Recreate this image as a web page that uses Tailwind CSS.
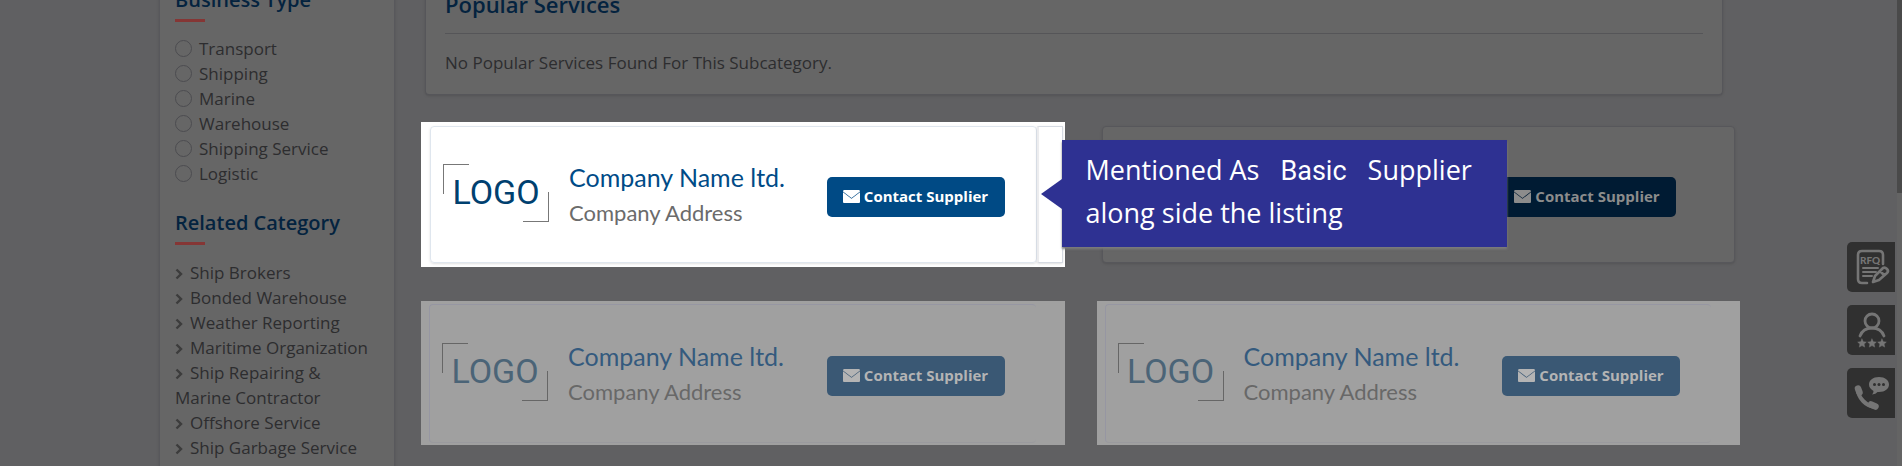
<!DOCTYPE html>
<html lang="en">
<head>
    <meta charset="UTF-8">
    <meta name="viewport" content="width=device-width, initial-scale=1.0">
    <title>Suppliers</title>
    <script src="https://cdn.jsdelivr.net/npm/@tailwindcss/browser@4"></script>
</head>
<body class="bg-[#606062] font-['Open_Sans',sans-serif] text-[17px] leading-[25px] text-[#2d2d2f] h-screen overflow-hidden">
    <svg class="hidden">
        <symbol id="envelope" viewBox="0 0 17 13">
            <path fill="currentColor" d="M1 0h15Q17 0 17 1.500L8.500 8 0 1.500Q0 0 1 0zM0 2.300 8.500 8.800 17 2.300v9.700Q17 13 16 13h-15Q0 13 0 12z" />
        </symbol>
        <symbol id="chevron" viewBox="0 0 8 12">
            <path d="M1.500 1.500 6 6l-4.500 4.500" fill="none" stroke="currentColor" stroke-width="2.400" />
        </symbol>
    </svg>

    <div class="flex -mt-[15px] pl-[159px] pr-[162px]">
        <!-- Sidebar -->
        <aside class="w-[236px] shrink-0 h-[500px] bg-[#666] border-x border-[#58585c] shadow pl-[15px] pr-4">
            <h2 class="text-xl leading-[30px] font-semibold text-[#04233f]">Business Type</h2>
            <div class="mt-1 w-[30px] h-[3px] bg-[#853635]"></div>
            <div class="mt-[14px]">
                <label class="flex items-center gap-[7px]"><input type="radio" name="type" class="appearance-none size-[17px] rounded-full border border-[#4c4c50]">Transport</label>
                <label class="flex items-center gap-[7px]"><input type="radio" name="type" class="appearance-none size-[17px] rounded-full border border-[#4c4c50]">Shipping</label>
                <label class="flex items-center gap-[7px]"><input type="radio" name="type" class="appearance-none size-[17px] rounded-full border border-[#4c4c50]">Marine</label>
                <label class="flex items-center gap-[7px]"><input type="radio" name="type" class="appearance-none size-[17px] rounded-full border border-[#4c4c50]">Warehouse</label>
                <label class="flex items-center gap-[7px]"><input type="radio" name="type" class="appearance-none size-[17px] rounded-full border border-[#4c4c50]">Shipping Service</label>
                <label class="flex items-center gap-[7px]"><input type="radio" name="type" class="appearance-none size-[17px] rounded-full border border-[#4c4c50]">Logistic</label>
            </div>

            <h2 class="mt-[22px] text-xl leading-[30px] font-semibold text-[#04233f]">Related Category</h2>
            <div class="mt-1 w-[30px] h-[3px] bg-[#853635]"></div>
            <ul class="mt-[15px]">
                <li><a href="#"><svg class="inline w-2 h-3 mr-[7px] text-[#3c3c3c]"><use href="#chevron" /></svg>Ship Brokers</a></li>
                <li><a href="#"><svg class="inline w-2 h-3 mr-[7px] text-[#3c3c3c]"><use href="#chevron" /></svg>Bonded Warehouse</a></li>
                <li><a href="#"><svg class="inline w-2 h-3 mr-[7px] text-[#3c3c3c]"><use href="#chevron" /></svg>Weather Reporting</a></li>
                <li><a href="#"><svg class="inline w-2 h-3 mr-[7px] text-[#3c3c3c]"><use href="#chevron" /></svg>Maritime Organization</a></li>
                <li><a href="#"><svg class="inline w-2 h-3 mr-[7px] text-[#3c3c3c]"><use href="#chevron" /></svg>Ship Repairing &amp;<br>Marine Contractor</a></li>
                <li><a href="#"><svg class="inline w-2 h-3 mr-[7px] text-[#3c3c3c]"><use href="#chevron" /></svg>Offshore Service</a></li>
                <li><a href="#"><svg class="inline w-2 h-3 mr-[7px] text-[#3c3c3c]"><use href="#chevron" /></svg>Ship Garbage Service</a></li>
            </ul>
        </aside>

        <main class="flex-1 ml-[26px]">
            <!-- Popular services -->
            <section class="ml-1 mr-[17px] bg-[#666] border border-t-0 border-[#56565a] rounded-sm shadow px-[19px] pt-1 pb-[19px]">
                <h2 class="pb-[14px] border-b border-[#555558] text-[22px] leading-[30px] font-semibold text-[#04233f]">Popular Services</h2>
                <p class="mt-4">No Popular Services Found For This Subcategory.</p>
            </section>

            <!-- Supplier listing -->
            <div class="mt-[27px] grid grid-cols-2 gap-x-8 gap-y-[34px]">
                <article class="relative flex h-[145px] bg-white py-1 pl-[9px] pr-[2px]">
                    <div class="flex flex-1 items-center border border-[#dfe6ee] rounded-sm shadow-sm pl-3 pr-[31px]">
                        <div class="relative w-[106px] h-[58px] mb-1 flex items-center justify-center text-[34px] text-[#00406f] font-['Liberation_Sans_Narrow','Roboto',sans-serif]">
                            <span class="absolute left-0 top-0 w-[26px] h-[30px] border-l border-t border-[#777]"></span>
                            LOGO
                            <span class="absolute right-0 bottom-0 w-[26px] h-[30px] border-r border-b border-[#777]"></span>
                        </div>
                        <div class="ml-5 flex-1 font-['Lato',sans-serif]">
                            <h3 class="text-[25px] leading-9 text-[#004b87]">Company Name ltd.</h3>
                            <p class="text-[22px] leading-9 text-[#6b6b6b]">Company Address</p>
                        </div>
                        <button class="mt-1 flex items-center justify-center gap-1 w-[178px] h-10 rounded-[5px] bg-[#004a85] text-white text-[15px] font-bold"><svg class="w-[17px] h-[13px]"><use href="#envelope" /></svg>Contact Supplier</button>
                    </div>
                    <div class="w-[26px] border-y border-r border-[#d5dae2] border-l-2 border-l-[#ececee] shadow-sm"></div>

                    <!-- Callout -->
                    <div class="absolute z-10 left-full top-[18px] -ml-[3px] w-[445px] h-[107px] bg-[#2e3192] pl-6 pt-[9px] text-white text-[27px] leading-[42px] whitespace-nowrap shadow-[0_2px_2px_#7c7c7c]">
                        <svg class="absolute -left-[21px] top-[39px] w-[21px] h-[30px]" viewBox="0 0 21 30"><path d="M21 0v30L0 15z" fill="#2e3192" /></svg>
                        <p class="whitespace-pre">Mentioned As   <span class="font-['Roboto']">Basic</span>   Supplier</p>
                        <p>along side the listing</p>
                    </div>
                </article>

                <article class="flex items-center justify-end my-1 mx-[5px] bg-[#666] border border-[#57575b] rounded-sm shadow pr-[58px]">
                    <button class="mt-1 flex items-center justify-center gap-1 w-[178px] h-10 rounded-[5px] bg-[#001b33] text-[#8c8c8c] text-[15px] font-bold"><svg class="w-[17px] h-[13px]"><use href="#envelope" /></svg>Contact Supplier</button>
                </article>

                <article class="flex h-36 bg-[#a0a0a0] pt-[3px] pb-[2px] pl-2 pr-[29px]">
                    <div class="flex flex-1 items-center border border-r-0 border-[#9696a2] border-b-[#9a9a9e] rounded-sm pl-3 pr-[31px]">
                        <div class="relative w-[106px] h-[58px] mb-1 flex items-center justify-center text-[34px] text-[#4b6477] font-['Liberation_Sans_Narrow','Roboto',sans-serif]">
                            <span class="absolute left-0 top-0 w-[26px] h-[30px] border-l border-t border-[#666]"></span>
                            LOGO
                            <span class="absolute right-0 bottom-0 w-[26px] h-[30px] border-r border-b border-[#666]"></span>
                        </div>
                        <div class="ml-5 flex-1 font-['Lato',sans-serif]">
                            <h3 class="text-[25px] leading-9 text-[#345a7e]">Company Name ltd.</h3>
                            <p class="text-[22px] leading-9 text-[#686868]">Company Address</p>
                        </div>
                        <button class="mt-1 flex items-center justify-center gap-1 w-[178px] h-10 rounded-[5px] bg-[#3a5874] text-[#b4b4b4] text-[15px] font-bold"><svg class="w-[17px] h-[13px]"><use href="#envelope" /></svg>Contact Supplier</button>
                    </div>
                </article>

                <article class="flex h-36 bg-[#a0a0a0] pt-[3px] pb-[2px] pl-2 pr-[29px]">
                    <div class="flex flex-1 items-center border border-r-0 border-[#9696a2] border-b-[#9a9a9e] rounded-sm pl-3 pr-[31px]">
                        <div class="relative w-[106px] h-[58px] mb-1 flex items-center justify-center text-[34px] text-[#4b6477] font-['Liberation_Sans_Narrow','Roboto',sans-serif]">
                            <span class="absolute left-0 top-0 w-[26px] h-[30px] border-l border-t border-[#666]"></span>
                            LOGO
                            <span class="absolute right-0 bottom-0 w-[26px] h-[30px] border-r border-b border-[#666]"></span>
                        </div>
                        <div class="ml-5 flex-1 font-['Lato',sans-serif]">
                            <h3 class="text-[25px] leading-9 text-[#345a7e]">Company Name ltd.</h3>
                            <p class="text-[22px] leading-9 text-[#686868]">Company Address</p>
                        </div>
                        <button class="mt-1 flex items-center justify-center gap-1 w-[178px] h-10 rounded-[5px] bg-[#3a5874] text-[#b4b4b4] text-[15px] font-bold"><svg class="w-[17px] h-[13px]"><use href="#envelope" /></svg>Contact Supplier</button>
                    </div>
                </article>
            </div>
        </main>
    </div>

    <!-- Floating shortcuts -->
    <nav class="fixed right-[7px] top-[242px] flex flex-col gap-[13px] text-[#757575]">
        <button aria-label="Request for quote" class="w-12 h-[50px] rounded-l-[5px] bg-[#303030]">
            <svg class="w-12 h-[50px]" viewBox="0 0 48 50" fill="none" stroke="currentColor" stroke-width="2" stroke-linecap="round" stroke-linejoin="round">
                <path d="M20 41h-5q-4 0-4-4V13q0-4 4-4h17q4 0 4 4v9" stroke-width="2.600" />
                <path d="M16 26h15M16 30h13M16 34h9" />
                <path d="M26 40l2-6 8-8q2-1 4 1t0 4l-8 7zM33 29l4 4" stroke-width="2.600" />
                <text x="13" y="22" font-family="Lato" font-size="10" font-weight="900" fill="currentColor" stroke="none">RFQ</text>
            </svg>
        </button>
        <button aria-label="Reviews" class="w-12 h-[50px] rounded-l-[5px] bg-[#303030]">
            <svg class="w-12 h-[50px]" viewBox="0 0 48 50" fill="none" stroke="currentColor" stroke-width="2.800" stroke-linecap="round">
                <circle cx="25" cy="16" r="7" />
                <path d="M13 31q3-8 12-8t12 8" />
                <path id="star" d="M15 34l1.300 2.800 3 .3-2.200 2 .6 3-2.700-1.500-2.700 1.500.6-3-2.200-2 3-.3z" fill="currentColor" stroke-width="0.500" />
                <use href="#star" x="10" />
                <use href="#star" x="20" />
            </svg>
        </button>
        <button aria-label="Call us" class="w-12 h-[50px] rounded-l-[5px] bg-[#303030]">
            <svg class="w-12 h-[50px]" viewBox="0 0 48 50">
                <path fill="currentColor" d="M32 9c6 0 10 3.200 10 7.500S38 24 32 24l-1.500-.1Q29 26 25 26.500q1.500-1.500 1.500-3.600Q22 20.500 22 16.500C22 12.200 26 9 32 9z" />
                <g fill="#303030"><circle cx="27.500" cy="16.500" r="1.500" /><circle cx="32" cy="16.500" r="1.500" /><circle cx="36.500" cy="16.500" r="1.500" /></g>
                <path d="M11 21c0 9 8 17 17 18" fill="none" stroke="currentColor" stroke-width="4" />
                <path d="M11 20.500l1.500 4M24 36.500l4.500 2" fill="none" stroke="currentColor" stroke-width="6.500" stroke-linecap="round" />
            </svg>
        </button>
    </nav>

    <!-- Scrollbar track and thumb -->
    <div class="fixed right-0 top-0 w-[5px] h-full bg-[#646464]">
        <div class="h-[193px] bg-[#4a4a4a]"></div>
    </div>
</body>
</html>
